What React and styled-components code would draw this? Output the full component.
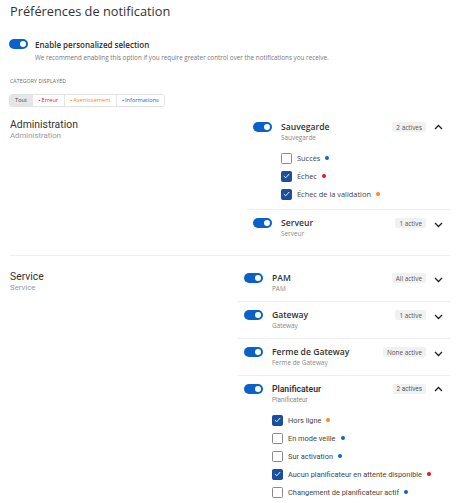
import React from 'react';
import styled, { createGlobalStyle } from 'styled-components';

const GlobalStyle = createGlobalStyle`
  body {
    margin: 0;
    background: #fff;
    font-family: 'Open Sans', 'Noto Sans', sans-serif;
    color: #333;
  }
`;

const COLORS = {
  info: '#1565c0',
  error: '#e8141c',
  warning: '#f28c1a',
};

const Page = styled.div`
  width: 440px;
  padding: 0 6px 0 10px;
`;

const Title = styled.h1`
  margin: 0;
  padding-top: 1px;
  font-size: 12.8px;
  line-height: 20px;
  font-weight: 400;
  color: #333;
`;

const MasterRow = styled.div`
  display: flex;
  align-items: flex-start;
  gap: 7px;
  margin-top: 18px;
  margin-left: -1px;
`;

const MasterText = styled.div`
  display: flex;
  flex-direction: column;
`;

const MasterLabel = styled.div`
  font-size: 8px;
  line-height: 11px;
  font-weight: 600;
  color: #2d2d2d;
`;

const MasterDesc = styled.div`
  margin-top: 3px;
  font-size: 6.3px;
  line-height: 9px;
  color: #777;
  white-space: nowrap;
`;

const Caption = styled.div`
  margin-top: 16px;
  font-size: 5.2px;
  line-height: 7px;
  letter-spacing: 0.1px;
  color: #666;
`;

const Tabs = styled.div`
  display: inline-flex;
  margin-top: 3px;
  margin-left: -1px;
  height: 11px;
  border: 1px solid #e2e2e2;
  border-radius: 3px;
  overflow: hidden;
`;

const Tab = styled.div`
  display: flex;
  align-items: center;
  justify-content: center;
  width: ${p => p.$w}px;
  font-size: 5.6px;
  color: ${p => p.$color || '#444'};
  background: ${p => (p.$active ? '#e6e6e6' : '#fff')};
  border-left: ${p => (p.$first ? 'none' : '1px solid #e6e6e6')};
  &::before {
    content: ${p => (p.$color ? "'\u25AA'" : 'none')};
    margin-right: 1px;
    font-size: 5px;
  }
`;

const Section = styled.div`
  display: flex;
  justify-content: space-between;
  border-bottom: ${p => (p.$last ? 'none' : '1px solid #efefef')};
  padding-top: ${p => p.$pt}px;
  padding-bottom: ${p => p.$pb}px;
`;

const SectionHead = styled.div`
  padding-top: ${p => p.$pt}px;
`;

const SectionTitle = styled.div`
  font-family: Roboto, 'Open Sans', sans-serif;
  font-size: 10.4px;
  line-height: 13px;
  color: #333;
`;

const SectionSub = styled.div`
  font-family: Roboto, 'Open Sans', sans-serif;
  font-size: 7.8px;
  line-height: 10px;
  color: #9a9a9a;
`;

const Groups = styled.div`
  width: ${p => p.$w}px;
  display: flex;
  flex-direction: column;
`;

const Group = styled.div`
  padding: 8px 0 ${p => (p.$open ? 6 : 7)}px 6px;
  border-top: ${p => (p.$first ? 'none' : '1px solid #efefef')};
  font-family: ${p => (p.$roboto ? "Roboto, 'Open Sans', sans-serif" : "'Open Sans', sans-serif")};
`;

const GroupHeader = styled.div`
  display: flex;
  align-items: flex-start;
`;

const GroupText = styled.div`
  flex: 1;
  margin-left: 9px;
`;

const GroupName = styled.div`
  font-size: 8.6px;
  line-height: 11px;
  font-weight: 600;
  color: #333;
`;

const GroupSub = styled.div`
  font-size: 6.4px;
  line-height: 10px;
  color: #888;
`;

const Badge = styled.div`
  height: 10px;
  padding: 0 4px;
  display: flex;
  align-items: center;
  background: #f1f1f1;
  border-radius: 2px;
  font-size: 6.4px;
  color: #555;
  white-space: nowrap;
`;

const Chevron = styled.div`
  width: 24px;
  height: 10px;
  display: flex;
  align-items: center;
  justify-content: center;
  margin-top: ${p => (p.$open ? 0 : 2)}px;
`;

const ToggleTrack = styled.div`
  flex: none;
  width: 19px;
  height: 10px;
  border-radius: 5px;
  background: #0a62c9;
  position: relative;
`;

const ToggleKnob = styled.div`
  position: absolute;
  right: 2px;
  top: 2px;
  width: 6px;
  height: 6px;
  border-radius: 50%;
  background: #fff;
`;

const CheckList = styled.div`
  margin: 6px 0 0 28px;
  display: flex;
  flex-direction: column;
`;

const CheckRow = styled.div`
  display: flex;
  align-items: center;
  height: 18px;
`;

const Box = styled.div`
  flex: none;
  width: 11px;
  height: 11px;
  box-sizing: border-box;
  border-radius: 1.5px;
  border: 1px solid ${p => (p.$on ? '#1b4f9c' : '#8a8a8a')};
  background: ${p => (p.$on ? '#1b4f9c' : '#fff')};
  display: flex;
  align-items: center;
  justify-content: center;
`;

const CheckLabel = styled.span`
  margin-left: 5px;
  font-size: 7.4px;
  color: #444;
  white-space: nowrap;
`;

const Dot = styled.span`
  width: 4px;
  height: 4px;
  border-radius: 50%;
  margin-left: 5px;
  background: ${p => COLORS[p.$type]};
`;

const Toggle = () => (
  <ToggleTrack>
    <ToggleKnob />
  </ToggleTrack>
);

const ChevronIcon = ({ open }) => (
  <svg width="9" height="6" viewBox="0 0 9 6">
    <path
      d={open ? 'M1 5 L4.5 1.5 L8 5' : 'M1 1 L4.5 4.5 L8 1'}
      fill="none"
      stroke="#222"
      strokeWidth="1.3"
    />
  </svg>
);

const CheckItem = ({ label, on, type }) => (
  <CheckRow>
    <Box $on={on}>
      {on && (
        <svg width="7" height="6" viewBox="0 0 7 6">
          <path d="M0.8 3 L2.7 4.8 L6.2 1" fill="none" stroke="#fff" strokeWidth="0.9" />
        </svg>
      )}
    </Box>
    <CheckLabel>{label}</CheckLabel>
    <Dot $type={type} />
  </CheckRow>
);

const NotifGroup = ({ name, badge, open, items, first, roboto }) => (
  <Group $first={first} $open={open} $roboto={roboto}>
    <GroupHeader>
      <Toggle />
      <GroupText>
        <GroupName>{name}</GroupName>
        <GroupSub>{name}</GroupSub>
      </GroupText>
      <Badge>{badge}</Badge>
      <Chevron $open={open}>
        <ChevronIcon open={open} />
      </Chevron>
    </GroupHeader>
    {open && (
      <CheckList>
        {items.map(it => (
          <CheckItem key={it.label} {...it} />
        ))}
      </CheckList>
    )}
  </Group>
);

const adminGroups = [
  {
    name: 'Sauvegarde',
    badge: '2 actives',
    open: true,
    items: [
      { label: 'Succès', on: false, type: 'info' },
      { label: 'Échec', on: true, type: 'error' },
      { label: 'Échec de la validation', on: true, type: 'warning' },
    ],
  },
  { name: 'Serveur', badge: '1 active' },
];

const serviceGroups = [
  { name: 'PAM', badge: 'All active' },
  { name: 'Gateway', badge: '1 active' },
  { name: 'Ferme de Gateway', badge: 'None active' },
  {
    name: 'Planificateur',
    badge: '2 actives',
    open: true,
    roboto: true,
    items: [
      { label: 'Hors ligne', on: true, type: 'warning' },
      { label: 'En mode veille', on: false, type: 'info' },
      { label: 'Sur activation', on: false, type: 'info' },
      { label: 'Aucun planificateur en attente disponible', on: true, type: 'error' },
      { label: 'Changement de planificateur actif', on: false, type: 'info' },
    ],
  },
];

const App = () => (
  <Page>
    <GlobalStyle />
    <Title>Préférences de notification</Title>
    <MasterRow>
      <Toggle />
      <MasterText>
        <MasterLabel>Enable personalized selection</MasterLabel>
        <MasterDesc>
          We recommend enabling this option if you require greater control over the notifications you receive.
        </MasterDesc>
      </MasterText>
    </MasterRow>
    <Caption>CATEGORY DISPLAYED</Caption>
    <Tabs>
      <Tab $w={22} $active $first>Tout</Tab>
      <Tab $w={31} $color={COLORS.error}>Erreur</Tab>
      <Tab $w={51} $color={COLORS.warning}>Avertissement</Tab>
      <Tab $w={47} $color={COLORS.info}>Informations</Tab>
    </Tabs>
    <Section $pt={7} $pb={9}>
      <SectionHead $pt={4}>
        <SectionTitle>Administration</SectionTitle>
        <SectionSub>Administration</SectionSub>
      </SectionHead>
      <Groups $w={203}>
        {adminGroups.map((g, i) => (
          <NotifGroup key={g.name} first={i === 0} {...g} />
        ))}
      </Groups>
    </Section>
    <Section $pt={9} $pb={0} $last>
      <SectionHead $pt={5}>
        <SectionTitle>Service</SectionTitle>
        <SectionSub>Service</SectionSub>
      </SectionHead>
      <Groups $w={212}>
        {serviceGroups.map((g, i) => (
          <NotifGroup key={g.name} first={i === 0} {...g} />
        ))}
      </Groups>
    </Section>
  </Page>
);

export default App;
